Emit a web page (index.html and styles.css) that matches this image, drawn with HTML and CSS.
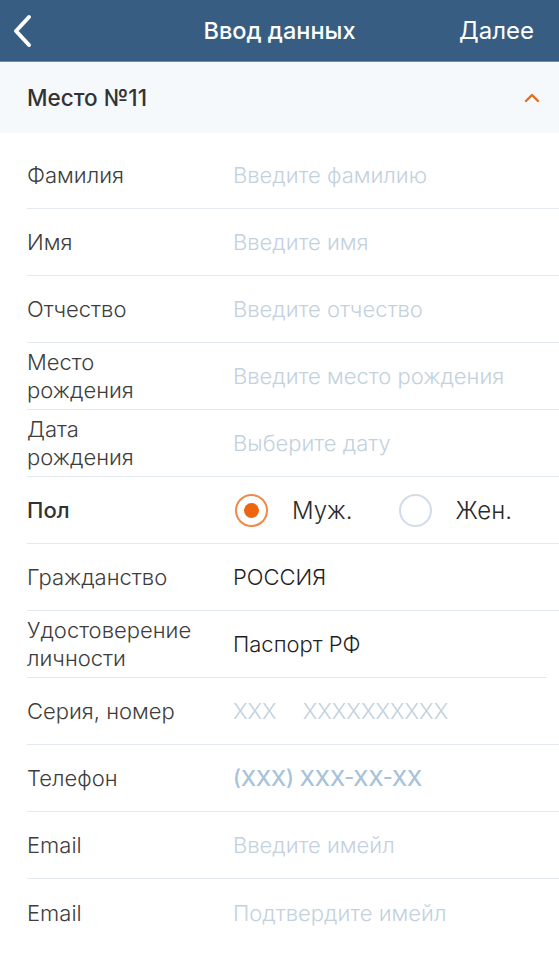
FILE: index.html
```html
<!DOCTYPE html>
<html lang="ru">
<head>
<meta charset="utf-8">
<link rel="stylesheet" href="styles.css">
</head>
<body>
<header class="topbar">
  <svg class="back" width="22" height="34" viewBox="0 0 22 34"><path d="M18 3 L5 17 L18 31" fill="none" stroke="#fff" stroke-width="4" stroke-linecap="round" stroke-linejoin="round"/></svg>
  <div class="title">Ввод данных</div>
  <div class="next">Далее</div>
</header>
<div class="section">
  <div class="section-title">Место №11</div>
  <svg class="chev" width="18" height="12" viewBox="0 0 18 12"><path d="M3 9 L9 3 L15 9" fill="none" stroke="#ec6a1c" stroke-width="2.4" stroke-linecap="round" stroke-linejoin="round"/></svg>
</div>
<div class="form">
  <div class="row"><div class="label">Фамилия</div><div class="ph">Введите фамилию</div></div>
  <div class="row"><div class="label">Имя</div><div class="ph">Введите имя</div></div>
  <div class="row"><div class="label">Отчество</div><div class="ph">Введите отчество</div></div>
  <div class="row"><div class="label">Место<br>рождения</div><div class="ph">Введите место рождения</div></div>
  <div class="row"><div class="label">Дата<br>рождения</div><div class="ph">Выберите дату</div></div>
  <div class="row"><div class="label bold">Пол</div>
    <div class="radios">
      <span class="radio on"></span><span class="rlabel">Муж.</span>
      <span class="radio"></span><span class="rlabel">Жен.</span>
    </div>
  </div>
  <div class="row"><div class="label">Гражданство</div><div class="val">РОССИЯ</div></div>
  <div class="row short"><div class="label">Удостоверение<br>личности</div><div class="val">Паспорт РФ</div></div>
  <div class="row"><div class="label">Серия, номер</div><div class="ph"><span class="ser">XXX</span>XXXXXXXXXX</div></div>
  <div class="row"><div class="label">Телефон</div><div class="ph phone">(XXX) XXX-XX-XX</div></div>
  <div class="row"><div class="label">Email</div><div class="ph">Введите имейл</div></div>
  <div class="row last"><div class="label">Email</div><div class="ph">Подтвердите имейл</div></div>
</div>
</body>
</html>
```
FILE: styles.css
```css
* { box-sizing: border-box; }
html, body { margin: 0; padding: 0; background: #fff; }
body { font-family: Inter, Roboto, "Noto Sans", sans-serif; color: #333; width: 559px; }
.topbar {
  height: 62px; background: #385d83; border-bottom: 1px solid #6d8bab;
  display: flex; align-items: center; position: relative; padding: 0 25px 0 11px;
}
.back { display: block; }
.title {
  position: absolute; left: 0; right: 0; text-align: center;
  color: #fff; font-size: 23.5px; font-weight: 500; pointer-events: none;
}
.next { margin-left: auto; color: #fff; font-size: 24px; font-weight: 400; }
.section {
  height: 71px; background: #f5f9fc; display: flex; align-items: center;
  padding: 0 18px 0 27px;
}
.section-title { font-size: 22.5px; font-weight: 500; color: #333; }
.chev { margin-left: auto; }
.form { padding-top: 9px; }
.row {
  height: 67px; margin-left: 27px; border-bottom: 1px solid #e3e9ef;
  display: flex; align-items: center;
}
.row.short { margin-right: 12px; }
.row.last { border-bottom: none; }
.label { width: 206px; flex: none; font-size: 22px; line-height: 28px; color: #3d3d3d; font-weight: 300; }
.label.bold { font-weight: 500; color: #333; }
.ph { font-size: 22px; color: #c3d1dd; font-weight: 300; }
.ph.phone { color: #a8c2d8; font-weight: 500; font-size: 21.5px; }
.ser { margin-right: 26px; }
.val { font-size: 22px; color: #1f1f1f; font-weight: 300; }
.radios { display: flex; align-items: center; }
.radio {
  width: 33px; height: 33px; border-radius: 50%; border: 2px solid #d3dde7;
  display: flex; align-items: center; justify-content: center; margin-left: 2px;
}
.radio.on { border-color: #f08a4b; }
.radio.on::after { content: ""; width: 15px; height: 15px; border-radius: 50%; background: #ee6510; }
.rlabel { font-size: 24px; color: #2a2a2a; margin-left: 24px; margin-right: 44px; font-weight: 300; }
```
